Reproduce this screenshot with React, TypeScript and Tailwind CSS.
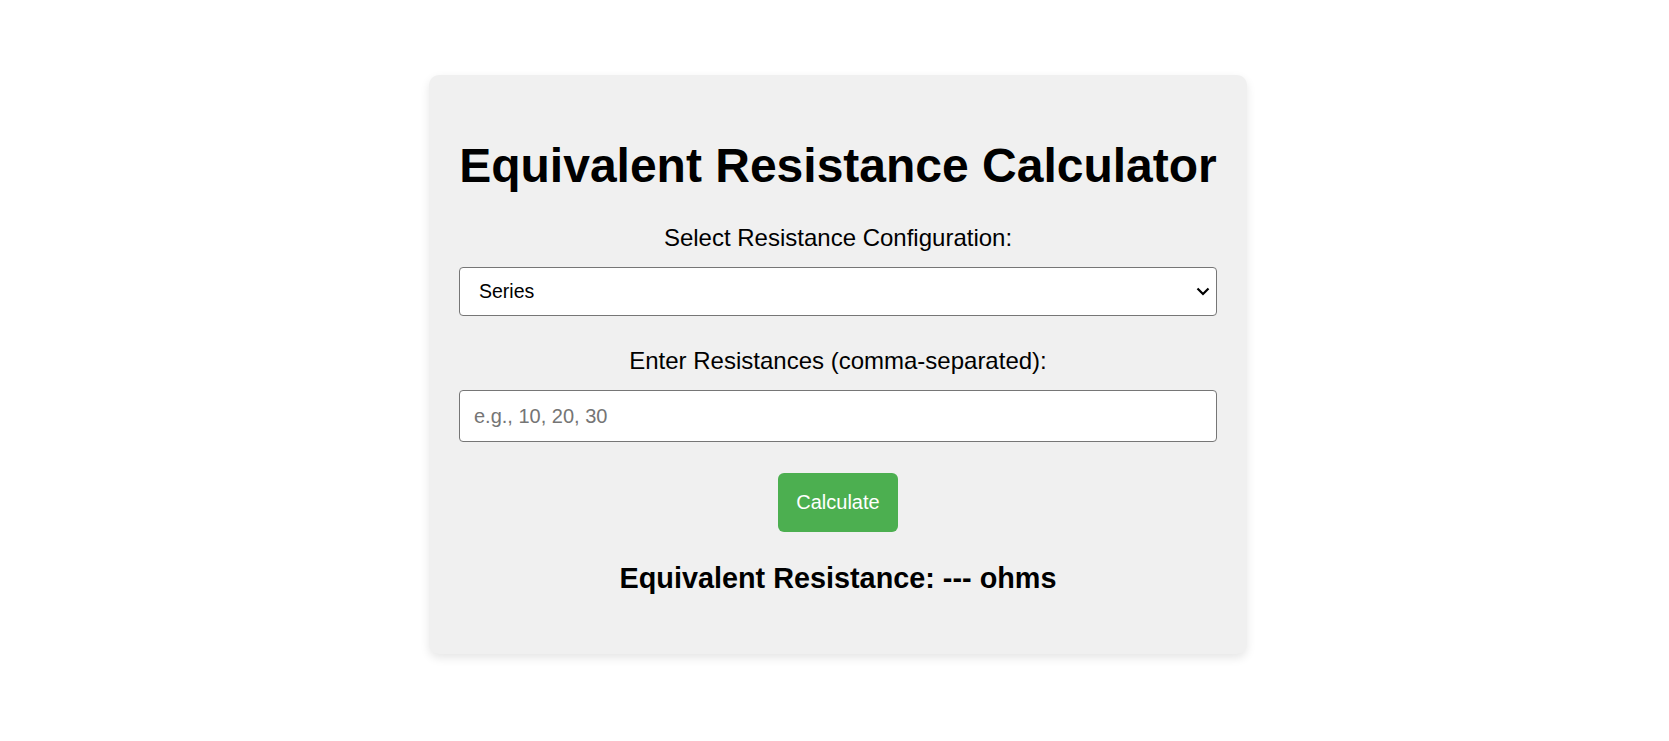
import { useState } from "react"

function App() {
  const [config, setConfig] = useState("series")
  const [values, setValues] = useState("")
  const [result, setResult] = useState("---")

  const calculate = () => {
    const nums = values
      .split(",")
      .map((v) => parseFloat(v.trim()))
      .filter((n) => !isNaN(n) && n > 0)
    if (!nums.length) {
      setResult("---")
      return
    }
    const total =
      config === "series"
        ? nums.reduce((a, b) => a + b, 0)
        : 1 / nums.reduce((a, b) => a + 1 / b, 0)
    setResult(String(Math.round(total * 100) / 100))
  }

  return (
    <div className="min-h-screen bg-white pt-[75px] font-['Liberation_Sans',Arial,sans-serif] text-black">
      <div className="flex justify-center">
        <div className="ml-[7px] flex w-[818px] flex-col items-center rounded-[10px] bg-[#f0f0f0] px-[30px] pb-[59px] pt-[64px] text-center shadow-[0_4px_10px_rgba(0,0,0,0.1)]">
          <h1 className="text-[48px] font-bold leading-[54px]">
            Equivalent Resistance Calculator
          </h1>

          <label className="mt-[31px] text-[24px] leading-[28px]">
            Select Resistance Configuration:
          </label>
          <div className="relative mt-[15px] w-full">
            <select
              value={config}
              onChange={(e) => setConfig(e.target.value)}
              className="h-[49px] w-full appearance-none rounded-[4px] border border-[#767676] bg-white pl-[19px] text-left text-[19.5px]"
            >
              <option value="series">Series</option>
              <option value="parallel">Parallel</option>
            </select>
            <svg
              className="pointer-events-none absolute right-[7px] top-[20px]"
              width="14"
              height="9"
              viewBox="0 0 14 9"
              fill="none"
            >
              <path d="M1.5 1.5 7 7l5.5-5.5" stroke="#000" strokeWidth="2.2" />
            </svg>
          </div>

          <label className="mt-[31px] text-[24px] leading-[28px]">
            Enter Resistances (comma-separated):
          </label>
          <input
            value={values}
            onChange={(e) => setValues(e.target.value)}
            placeholder="e.g., 10, 20, 30"
            className="mt-[15px] h-[52px] w-full rounded-[4px] border border-[#767676] bg-white px-[14px] text-[20px] placeholder:text-[#757575]"
          />

          <button
            onClick={calculate}
            className="mt-[31px] h-[59px] w-[120px] rounded-[6px] bg-[#4caf50] pb-[2px] text-[20px] text-white"
          >
            Calculate
          </button>

          <h2 className="mt-[30px] text-[28.8px] font-bold leading-[33px]">
            Equivalent Resistance: {result} ohms
          </h2>
        </div>
      </div>
    </div>
  )
}

export default App
